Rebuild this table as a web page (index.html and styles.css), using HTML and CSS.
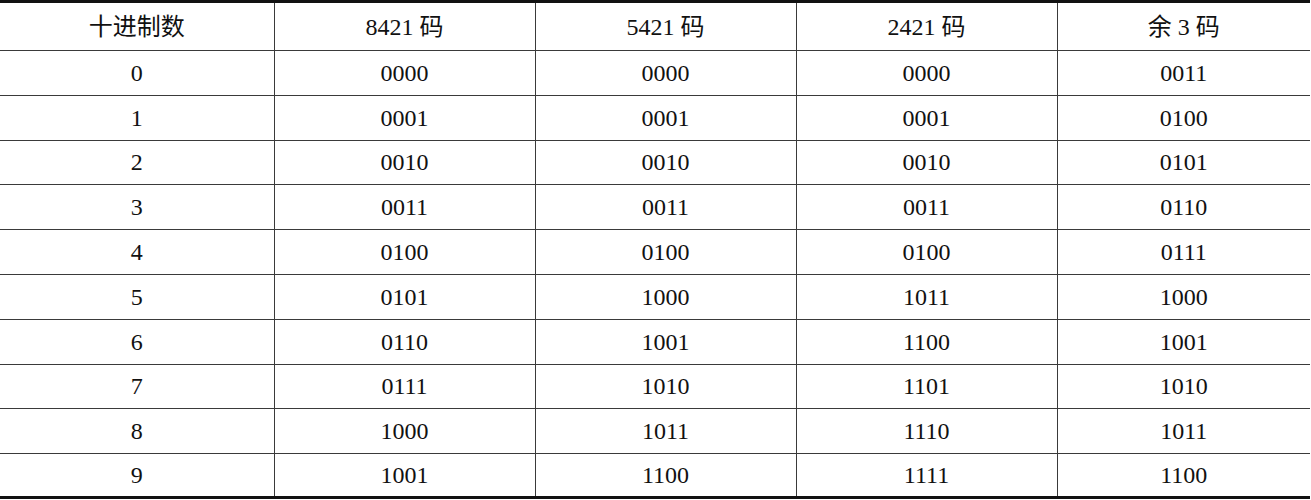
FILE: index.html
```html
<!DOCTYPE html>
<html lang="zh">
<head>
<meta charset="utf-8">
<title>BCD 码</title>
<link rel="stylesheet" href="styles.css">
</head>
<body>
<table class="codes">
  <colgroup>
    <col class="c-first">
    <col class="c-col">
    <col class="c-col">
    <col class="c-col">
    <col class="c-last">
  </colgroup>
  <thead>
    <tr class="head"><th>十进制数</th><th>8421 码</th><th>5421 码</th><th>2421 码</th><th>余 3 码</th></tr>
  </thead>
  <tbody>
    <tr><td>0</td><td>0000</td><td>0000</td><td>0000</td><td>0011</td></tr>
    <tr><td>1</td><td>0001</td><td>0001</td><td>0001</td><td>0100</td></tr>
    <tr><td>2</td><td>0010</td><td>0010</td><td>0010</td><td>0101</td></tr>
    <tr><td>3</td><td>0011</td><td>0011</td><td>0011</td><td>0110</td></tr>
    <tr><td>4</td><td>0100</td><td>0100</td><td>0100</td><td>0111</td></tr>
    <tr><td>5</td><td>0101</td><td>1000</td><td>1011</td><td>1000</td></tr>
    <tr><td>6</td><td>0110</td><td>1001</td><td>1100</td><td>1001</td></tr>
    <tr><td>7</td><td>0111</td><td>1010</td><td>1101</td><td>1010</td></tr>
    <tr><td>8</td><td>1000</td><td>1011</td><td>1110</td><td>1011</td></tr>
    <tr class="last"><td>9</td><td>1001</td><td>1100</td><td>1111</td><td>1100</td></tr>
  </tbody>
</table>
</body>
</html>
```
FILE: styles.css
```css
html, body {
  margin: 0;
  padding: 0;
  background: #ffffff;
}

.codes {
  width: 1310px;
  border-collapse: collapse;
  table-layout: fixed;
  border-top: 3px solid #111;
  border-bottom: 3px solid #111;
  font-family: "Liberation Serif", "Noto Sans CJK SC", serif;
  font-size: 24px;
  color: #111;
}

.c-first { width: 274px; }
.c-col { width: 261px; }
.c-last { width: 253px; }

.codes th,
.codes td {
  padding: 0;
  text-align: center;
  vertical-align: middle;
  font-weight: normal;
  border-bottom: 1px solid #3a3a3a;
  border-left: 1px solid #3a3a3a;
  line-height: 1;
}

.codes th:first-child,
.codes td:first-child {
  border-left: none;
}

.head th {
  height: 47px;
}

.codes td {
  height: 43.8px;
}

.codes .last td {
  border-bottom: none;
  height: 42px;
}
```
